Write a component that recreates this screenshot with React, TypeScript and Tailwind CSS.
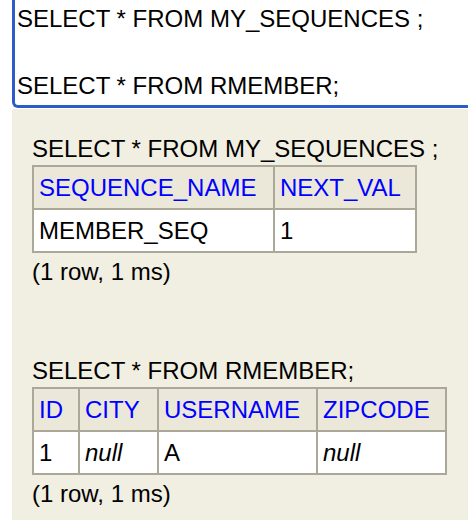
import React from "react";

type Cell = { text: string; italic?: boolean };

type Result = {
  sql: string;
  columns: { name: string; width: string }[];
  rows: Cell[][];
  status: string;
};

const resultados: Result[] = [
  {
    sql: "SELECT * FROM MY_SEQUENCES ;",
    columns: [
      { name: "SEQUENCE_NAME", width: "239px" },
      { name: "NEXT_VAL", width: "140px" },
    ],
    rows: [[{ text: "MEMBER_SEQ" }, { text: "1" }]],
    status: "(1 row, 1 ms)",
  },
  {
    sql: "SELECT * FROM RMEMBER;",
    columns: [
      { name: "ID", width: "44px" },
      { name: "CITY", width: "77px" },
      { name: "USERNAME", width: "157px" },
      { name: "ZIPCODE", width: "127px" },
    ],
    rows: [[{ text: "1" }, { text: "null", italic: true }, { text: "A" }, { text: "null", italic: true }]],
    status: "(1 row, 1 ms)",
  },
];

function TabelaResultado({ r }: { r: Result }) {
  return (
    <div
      className="grid w-fit gap-[2px] bg-[#aca899] p-[2px]"
      style={{ gridTemplateColumns: r.columns.map((c) => c.width).join(" ") }}
    >
      {r.columns.map((c) => (
        <div key={c.name} className="h-[41px] bg-[#ebe8da] pl-[5px] pt-[6px] leading-[29px] text-[#0000ff]">
          {c.name}
        </div>
      ))}
      {r.rows.map((row, i) =>
        row.map((cell, j) => (
          <div
            key={i + "-" + j}
            className={"h-[41px] bg-white pl-[5px] pt-[6px] leading-[29px] text-black" + (cell.italic ? " italic" : "")}
          >
            {cell.text}
          </div>
        ))
      )}
    </div>
  );
}

export default function App() {
  return (
    <div className="h-[520px] w-[468px] overflow-hidden bg-white pl-[12px] font-['Liberation_Sans',Arial,sans-serif] text-[24px] text-black">
      {/* Editor SQL (focado, cortado no topo e à direita) */}
      <div className="h-[107.5px] whitespace-pre rounded-bl-[6px] border-b-[3.5px] border-l-[3.5px] border-[#2b5cc8] bg-white pl-[2px] pt-[1.5px] leading-[33.5px]">
        {"SELECT * FROM MY_SEQUENCES ;\n\nSELECT * FROM RMEMBER;"}
      </div>

      {/* Resultados */}
      <div className="mt-[1px] h-full bg-[#f1eee2] pl-[20px] pt-[26px] leading-[28px]">
        {resultados.map((r, idx) => (
          <div key={idx} className={idx > 0 ? "mt-[71px]" : ""}>
            <div className="mb-[2px]">{r.sql}</div>
            <TabelaResultado r={r} />
            <div className="mt-[5px]">{r.status}</div>
          </div>
        ))}
      </div>
    </div>
  );
}
